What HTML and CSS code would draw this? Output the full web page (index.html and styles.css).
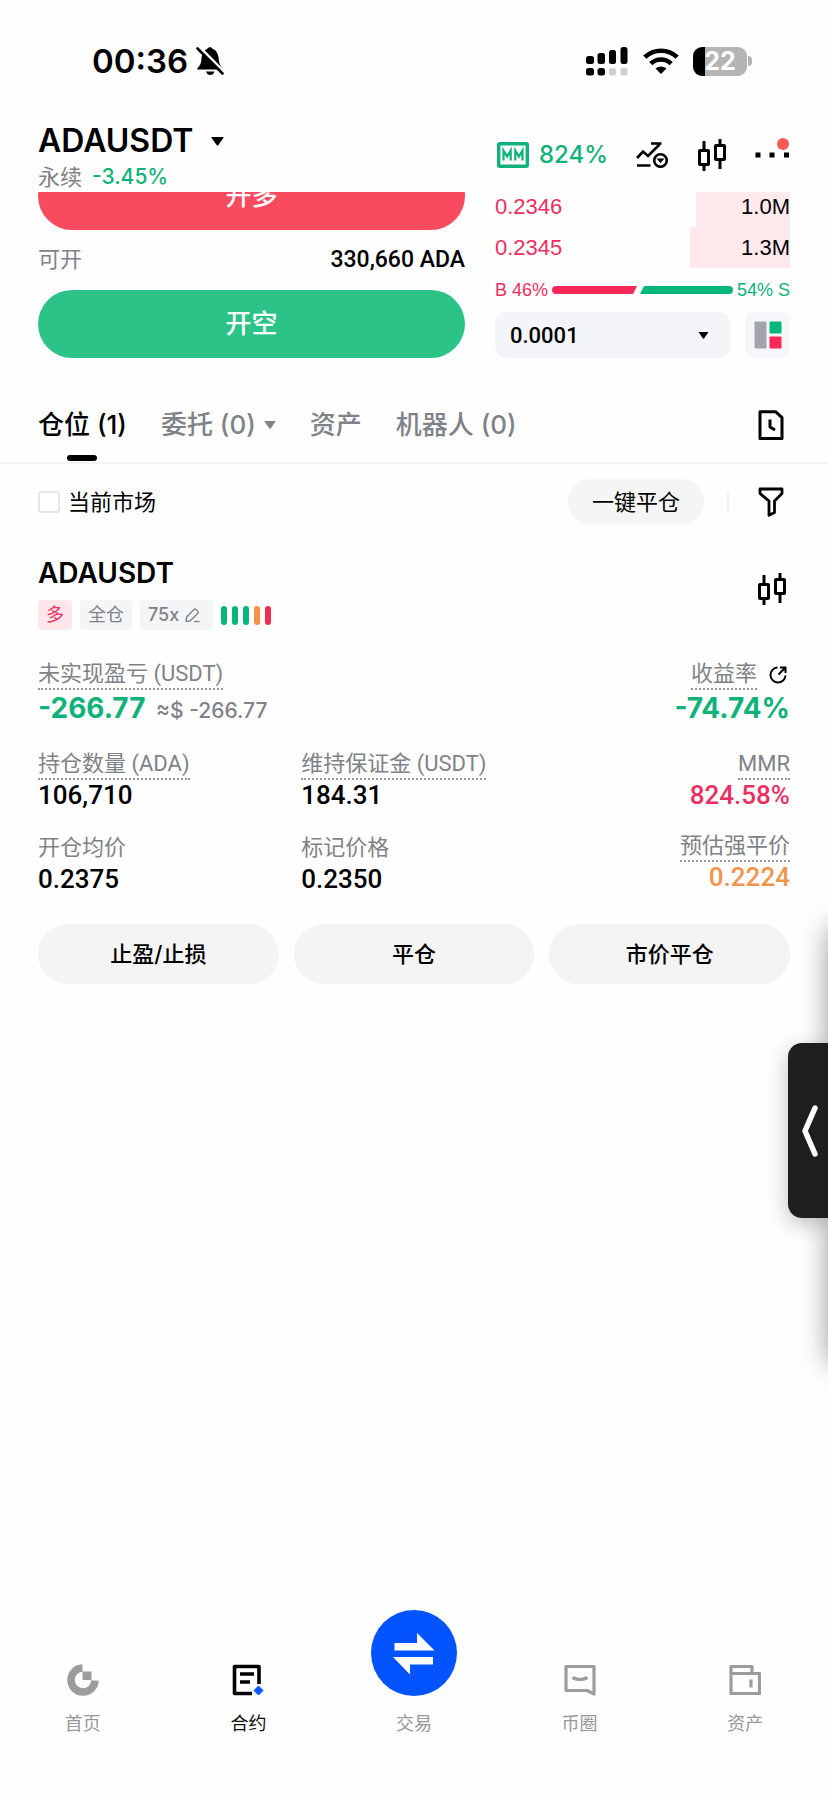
FILE: index.html
```html
<!DOCTYPE html>
<html lang="zh-CN">
<head>
<meta charset="utf-8">
<meta name="viewport" content="width=device-width, initial-scale=1">
<title>ADAUSDT 永续</title>
<link rel="stylesheet" href="styles.css">
</head>
<body>
<svg class="defs" aria-hidden="true">
  <symbol id="candles" viewBox="0 0 30 32">
    <g fill="none" stroke="currentColor" stroke-width="3">
      <rect x="2.5" y="11.5" width="9" height="14" rx="0.5"/>
      <path d="M7 2v9M7 26v6"/>
      <rect x="18.500" y="6.500" width="9" height="14" rx="0.5"/>
      <path d="M23 0v6M23 21v9"/>
    </g>
  </symbol>
  <symbol id="caret" viewBox="0 0 13 9">
    <path d="M0.800 0h11.400q0.800 0 0.300 0.800L7.200 8.300q-0.700 0.800-1.400 0L0.500 0.800Q0 0 0.800 0z" fill="currentColor"/>
  </symbol>
</svg>

<div class="app">
  <div class="status">
    <div class="status-left">
      <time class="clock">00:36</time>
      <svg class="bell" width="28" height="30" viewBox="0 0 28 30" aria-label="静音">
        <path d="M1 23.500c0-1.500 4-4 4.300-9C5.600 8 8 4 11.300 3 12 0.800 16 0.800 16.700 3c3.500 1 5.900 5 6.200 11.500.3 5 4.100 7.500 4.100 9z"/>
        <path d="M10 25.500h8.500q-1 3.500-4.200 3.500T10 25.500z"/>
        <path d="M3 0.500l26 26" stroke="#fff" stroke-width="2.600"/>
        <path d="M1.500 2.500l25 25" stroke="#000" stroke-width="2.600" stroke-linecap="round"/>
      </svg>
    </div>
    <div class="status-right">
      <svg width="43" height="29" viewBox="0 0 43 29" aria-label="信号">
        <rect x="0" y="9" width="8" height="8" rx="2.500"/>
        <rect x="11.500" y="6" width="7.500" height="11" rx="2.500"/>
        <rect x="23" y="3" width="7" height="14" rx="2.500"/>
        <rect x="34.500" y="0" width="7" height="17" rx="2.500"/>
        <rect x="0" y="21" width="8" height="7.500" rx="2.500"/>
        <rect x="11.500" y="21" width="7.500" height="7.500" rx="2.500"/>
        <g fill="#cfcfcf"><rect x="23" y="21" width="7" height="7.500" rx="2.500"/><rect x="34.500" y="21" width="7" height="7.500" rx="2.500"/></g>
      </svg>
      <svg width="36" height="26" viewBox="0 0 36 26" aria-label="无线网络">
        <g fill="none" stroke="#000" stroke-width="4.600">
          <path d="M1.800 9.200a23.500 23.500 0 0 1 32.400 0"/>
          <path d="M7.800 15.600a14.800 14.800 0 0 1 20.400 0"/>
        </g>
        <path d="M12.500 20.500a8.500 8.500 0 0 1 11 0L18 26z"/>
      </svg>
      <div class="battery"><span class="battery-cell">22</span><span class="battery-nub"></span></div>
    </div>
  </div>

  <header class="header">
    <div>
      <button class="pair" type="button"><span>ADAUSDT</span><svg width="13" height="9"><use href="#caret"/></svg></button>
      <p class="pair-sub"><span>永续</span><span class="pct">-3.45%</span></p>
    </div>
    <div class="tools">
      <button class="mm" type="button">
        <svg width="32" height="26" viewBox="0 0 32 26" fill="none" stroke="currentColor" aria-hidden="true">
          <rect x="1.700" y="1.700" width="28.600" height="22.600" rx="1" stroke-width="3.400"/>
          <path d="M6.500 18.500v-10l3.600 6 3.600-6v10M18.300 18.500v-10l3.600 6 3.600-6v10" stroke-width="2.200"/>
        </svg>
        <span>824%</span>
      </button>
      <button class="icon" type="button" aria-label="策略">
        <svg width="33" height="26" viewBox="0 0 33 26" fill="none" stroke="#000" stroke-width="2.600">
          <path d="M1 16l6-6.500 5 4.500L23.500 2.500M15 1.500h10.500M1 23.500h13.500"/>
          <circle cx="24.500" cy="18.500" r="6.300"/>
          <path d="M20.500 16.500h8L24.500 21z" fill="#000" stroke="none"/>
        </svg>
      </button>
      <button class="icon" type="button" aria-label="K线"><svg width="30" height="32"><use href="#candles"/></svg></button>
      <button class="icon more" type="button" aria-label="更多">
        <svg width="35" height="6" viewBox="0 0 35 6"><path d="M0.500 0.500h5v5h-5zM14.500 0.500h5v5h-5zM29 0.500h5v5h-5z"/></svg>
        <span class="dot"></span>
      </button>
    </div>
  </header>

  <main class="main">
    <section class="trade">
      <div class="order">
        <button class="cta long" type="button">开多</button>
        <div class="avail"><span class="label">可开</span><span class="avail-num">330,660 ADA</span></div>
        <button class="cta short" type="button">开空</button>
      </div>
      <div class="book">
        <div class="level first"><span class="ask">0.2346</span><span class="vol" style="width:32%">1.0M</span></div>
        <div class="level"><span class="ask">0.2345</span><span class="vol" style="width:34%">1.3M</span></div>
        <div class="ratio">
          <span class="buy">B 46%</span>
          <span class="ratio-bar"><i class="bar-buy" style="flex-grow:46"></i><i class="bar-sell" style="flex-grow:52"></i></span>
          <span class="sell">54% S</span>
        </div>
        <div class="precision">
          <label class="select"><select aria-label="价格精度"><option>0.0001</option></select><svg width="11" height="7"><use href="#caret"/></svg></label>
          <button class="layout" type="button" aria-label="盘口布局">
            <svg width="28" height="28" viewBox="0 0 28 28"><rect x="0.500" y="0.500" width="12" height="27" rx="1" fill="#a2a4ab"/><rect x="15.500" y="0.500" width="12" height="12" rx="1" fill="#06b77c"/><rect x="15.500" y="15.500" width="12" height="12" rx="1" fill="#fa2856"/></svg>
          </button>
        </div>
      </div>
    </section>

    <nav class="tabs">
      <button class="tab active" type="button">仓位 (1)</button>
      <button class="tab" type="button">委托 (0)<svg width="12" height="8"><use href="#caret"/></svg></button>
      <button class="tab" type="button">资产</button>
      <button class="tab" type="button">机器人 (0)</button>
      <button class="icon history" type="button" aria-label="历史">
        <svg width="26" height="30" viewBox="0 0 26 30" fill="none" stroke="#000" stroke-width="3" stroke-linejoin="round"><path d="M2 1.700h15.500l6.500 6V28.500H2z"/><path d="M12 9.500v7.500l5 3"/></svg>
      </button>
    </nav>

    <div class="filters">
      <label class="check"><input type="checkbox"><span>当前市场</span></label>
      <button class="close-all" type="button">一键平仓</button>
      <span class="sep"></span>
      <button class="icon" type="button" aria-label="筛选">
        <svg width="26" height="30" viewBox="0 0 26 30" fill="none" stroke="#000" stroke-width="2.800" stroke-linejoin="round"><path d="M2 2h22v4.500l-7.500 7.500v11.500l-5.500 2.800V14L2 6.500z"/></svg>
      </button>
    </div>

    <article class="position">
      <div class="pos-head">
        <div>
          <h2 class="pos-name">ADAUSDT</h2>
          <div class="tags">
            <span class="tag side">多</span>
            <span class="tag">全仓</span>
            <button class="tag" type="button">75x<svg width="15" height="15" viewBox="0 0 15 15" fill="none" stroke="currentColor" stroke-width="1.400" stroke-linejoin="round"><path d="M1 13.300l0.500-4L9 1.500q1-0.900 2 0l1.800 1.700q0.900 1 0 2L5 13z"/><path d="M9 13.500h5.500"/></svg></button>
            <span class="risk"><i></i><i></i><i></i><i class="warn"></i><i class="high"></i></span>
          </div>
        </div>
        <button class="icon pos-chart" type="button" aria-label="K线"><svg width="30" height="32"><use href="#candles"/></svg></button>
      </div>

      <div class="pnl">
        <div>
          <p class="label"><span class="hint">未实现盈亏 (USDT)</span></p>
          <p class="big">-266.77 <small>≈$ -266.77</small></p>
        </div>
        <div class="end">
          <p class="label"><span class="hint">收益率</span><svg class="share" width="18" height="18" viewBox="0 0 18 18" fill="none" stroke="#000" stroke-width="2"><path d="M8.500 1.500A7.500 7.500 0 1 0 16.500 9.500"/><path d="M9.500 8.500l6.500-6.500M11 1.500h5.500V7"/></svg></p>
          <p class="big">-74.74%</p>
        </div>
      </div>

      <div class="stats">
        <div><p class="label"><span class="hint">持仓数量 (ADA)</span></p><p class="num">106,710</p></div>
        <div><p class="label"><span class="hint">维持保证金 (USDT)</span></p><p class="num">184.31</p></div>
        <div class="end"><p class="label"><span class="hint">MMR</span></p><p class="num red">824.58%</p></div>
        <div><p class="label">开仓均价</p><p class="num">0.2375</p></div>
        <div><p class="label">标记价格</p><p class="num">0.2350</p></div>
        <div class="end"><p class="label"><span class="hint">预估强平价</span></p><p class="num orange">0.2224</p></div>
      </div>

      <div class="actions">
        <button type="button">止盈/止损</button>
        <button type="button">平仓</button>
        <button type="button">市价平仓</button>
      </div>
    </article>
  </main>

  <nav class="bottom">
    <a class="nav-item" href="#home">
      <svg width="32" height="32" viewBox="0 0 32 32"><path d="M15.500 4A12 12 0 1 0 28 16.500" fill="none" stroke="#9a9c9e" stroke-width="7.500"/><path d="M15.500 7.500h9v8.500h-9z" fill="#9a9c9e"/></svg>
      <span>首页</span>
    </a>
    <a class="nav-item current" href="#futures">
      <svg width="32" height="32" viewBox="0 0 32 32" fill="none" stroke="#000" stroke-width="3.600"><path d="M27 20V2.500H2.500V29.500H20" stroke-linejoin="round"/><path d="M8 10h14M8 18h10"/><path d="M26.500 22l4.500 4.500-4.500 4.500-4.500-4.500z" fill="#0858f5" stroke="#0858f5" stroke-width="1" stroke-linejoin="round"/></svg>
      <span>合约</span>
    </a>
    <a class="nav-item" href="#trade">
      <span class="swap"><svg width="42" height="42" viewBox="0 0 42 42" fill="#fff"><path d="M1.500 11H24V1L41.500 18.500H1.500zM40 32.500H17V42.500L0 25H40z"/></svg></span>
      <span>交易</span>
    </a>
    <a class="nav-item" href="#community">
      <svg width="32" height="32" viewBox="0 0 32 32" fill="none" stroke="#9a9c9e" stroke-width="3.200" stroke-linejoin="round"><path d="M2 2.500h28V30l-7-3.500H2z"/><path d="M8.500 13.500q7.500 4 15 0"/></svg>
      <span>币圈</span>
    </a>
    <a class="nav-item" href="#assets">
      <svg width="32" height="32" viewBox="0 0 32 32" fill="none" stroke="#9a9c9e" stroke-width="3.200" stroke-linejoin="round"><path d="M2 9.500h28.500V29.500H2zM2 9.500V2.500H23V9.500"/><path d="M22 15.500v8"/></svg>
      <span>资产</span>
    </a>
  </nav>

  <div class="drawer"></div>
  <button class="handle" type="button" aria-label="展开侧栏">
    <svg width="16" height="52" viewBox="0 0 16 52" fill="none" stroke="#fff" stroke-width="5.500" stroke-linecap="round" stroke-linejoin="round"><path d="M13 3L3 26l10 23"/></svg>
  </button>
</div>
</body>
</html>
```
FILE: styles.css
```css
* { box-sizing: border-box; }

:root {
  --green: #0fb27a;
  --red: #ea2f62;
  --gray: #7f8287;
  --soft: #f5f5f5;
  --edge: 38px;
  --cjk: "Noto Sans CJK SC", sans-serif;
}

body {
  margin: 0;
  background: #fefefe;
  color: #000;
  font-family: Inter, var(--cjk);
  font-size: 22px;
  line-height: 32px;
}

p, h2 { margin: 0; }
svg { display: block; flex: none; }
.defs { position: absolute; width: 0; height: 0; }

button {
  border: 0;
  padding: 0;
  background: none;
  color: inherit;
  font: inherit;
  cursor: pointer;
}

a { color: inherit; text-decoration: none; }

.app {
  position: relative;
  display: flex;
  flex-direction: column;
  min-height: 100vh;
  overflow: hidden;
}

/* status bar */
.status {
  display: flex;
  justify-content: space-between;
  align-items: center;
  height: 122px;
  padding: 0 76px 0 92px;
}
.status-left { display: flex; align-items: center; gap: 8px; }
.status-right { display: flex; align-items: center; gap: 14px; }
.clock { font-size: 33px; font-weight: 600; }
.battery { display: flex; align-items: center; gap: 1px; }
.battery-cell {
  width: 54px;
  height: 29px;
  border-radius: 9px;
  background: linear-gradient(90deg, #000 12px, #b4b4b4 12px);
  color: #fff;
  font-size: 25px;
  font-weight: 700;
  line-height: 29px;
  text-align: center;
}
.battery-nub { width: 4px; height: 10px; border-radius: 0 5px 5px 0; background: #b4b4b4; }

/* header */
.header {
  display: flex;
  justify-content: space-between;
  align-items: flex-start;
  height: 70px;
  padding: 0 var(--edge);
}
.pair { display: flex; align-items: center; gap: 18px; font-size: 32px; font-weight: 600; line-height: 38px; }
.pair-sub { display: flex; gap: 10px; color: var(--gray); line-height: 34px; }
.pct { color: var(--green); font-size: 21px; font-weight: 500; }
.tools { display: flex; align-items: center; gap: 28px; height: 66px; }
.mm { display: flex; align-items: center; gap: 10px; color: var(--green); font-size: 24px; font-weight: 500; }
.more { position: relative; }
.dot { position: absolute; right: 1px; bottom: 8px; width: 12px; height: 12px; border-radius: 50%; background: #fa5a50; }

/* order form and book */
.trade {
  display: grid;
  grid-template-columns: 427fr 295fr;
  gap: 30px;
  padding: 0 var(--edge);
  overflow: hidden;
}
.order { display: flex; flex-direction: column; }
.cta {
  height: 68px;
  border-radius: 34px;
  color: #fff;
  font-size: 26px;
  font-weight: 500;
}
.long { margin-top: -30px; background: #f94b60; }
.short { background: #2cc388; }
.avail { display: flex; justify-content: space-between; align-items: center; height: 60px; }
.avail-num { font-family: Roboto, var(--cjk); font-size: 23px; font-weight: 500; }

.level, .ratio { font-family: "Liberation Sans", var(--cjk); }
.level { display: flex; justify-content: space-between; line-height: 41px; }
.level.first { margin-top: -6px; }
.ask, .buy { color: var(--red); }
.vol { background: #ffe9ec; text-align: right; }
.ratio { display: flex; align-items: center; gap: 4px; height: 44px; font-size: 18px; }
.ratio-bar { display: flex; flex: 1; height: 8px; }
.ratio-bar i { flex-basis: 0; }
.bar-buy { border-radius: 4px 0 0 4px; background: #fa2856; clip-path: polygon(0 0, 100% 0, calc(100% - 4px) 100%, 0 100%); }
.bar-sell { border-radius: 0 4px 4px 0; background: #06b77c; clip-path: polygon(7px 0, 100% 0, 100% 100%, 3px 100%); }
.sell { color: var(--green); }
.precision { display: flex; gap: 15px; }
.select { position: relative; flex: 1; }
.select select {
  width: 100%;
  height: 46px;
  padding: 0 15px;
  border: 0;
  border-radius: 12px;
  background: #f4f5f8;
  color: #000;
  font: 500 22px Roboto, sans-serif;
  appearance: none;
}
.select svg { position: absolute; right: 21px; top: 20px; pointer-events: none; }
.layout {
  display: grid;
  place-items: center;
  width: 45px;
  height: 46px;
  border-radius: 9px;
  background: #f5f6f9;
}

/* tabs */
.tabs {
  display: flex;
  align-items: stretch;
  gap: 34px;
  height: 72px;
  margin-top: 34px;
  padding: 0 44px 0 var(--edge);
  border-bottom: 2px solid #f3f3f3;
}
.tab { position: relative; display: flex; align-items: center; gap: 8px; padding-bottom: 4px; color: var(--gray); font-size: 26px; font-weight: 500; }
.tab.active { color: #000; }
.tab.active::after {
  content: "";
  position: absolute;
  bottom: 1px;
  left: 50%;
  width: 30px;
  height: 6px;
  margin-left: -15px;
  border-radius: 3px;
  background: #000;
}
.history { margin-left: auto; padding-bottom: 4px; }

/* filters */
.filters { display: flex; align-items: center; height: 76px; padding: 0 44px 0 var(--edge); }
.check { display: flex; align-items: center; gap: 8px; margin-right: auto; }
.check input {
  width: 22px;
  height: 22px;
  margin: 0;
  border: 2px solid #e6e6e6;
  border-radius: 3px;
  background: #fff;
  appearance: none;
}
.close-all { height: 46px; padding: 0 24px; border-radius: 23px; background: var(--soft); }
.sep { width: 2px; height: 22px; margin: 0 29px 0 23px; background: #f1f1f1; }

/* position card */
.position { padding: 13px var(--edge) 0; }
.pos-head { display: flex; justify-content: space-between; align-items: flex-start; }
.pos-chart { margin: 20px 3px 0 0; }
.pos-name { font-size: 28px; font-weight: 600; line-height: 40px; }
.tags { display: flex; align-items: center; gap: 8px; margin-top: 7px; }
.tag {
  display: flex;
  align-items: center;
  gap: 6px;
  height: 30px;
  padding: 0 8px;
  border-radius: 4px;
  background: #f4f5f7;
  color: var(--gray);
  font-size: 18px;
}
.side { background: #ffe6ea; color: var(--red); }
button.tag { padding: 0 13px 0 8px; font-weight: 500; }
.risk { display: flex; gap: 5px; }
.risk i { width: 6px; height: 19px; border-radius: 3px; background: #06b77c; }
.risk .warn { background: #f99148; }
.risk .high { background: #ee2f55; }

.pnl { display: flex; justify-content: space-between; margin-top: 30px; }
.label { display: flex; align-items: center; color: var(--gray); font-family: Roboto, var(--cjk); line-height: 32px; }
.hint { border-bottom: 2px dotted #96999c; line-height: 28px; }
.big { color: var(--green); font-size: 28px; font-weight: 700; line-height: 36px; }
.big small { margin-left: 4px; color: var(--gray); font-size: 21px; font-weight: 500; }
.end { text-align: right; }
.end .label { justify-content: flex-end; }
.share { margin: 0 3px 0 12px; }

.stats { display: grid; grid-template-columns: 35% 35% 30%; row-gap: 22px; margin-top: 21px; }
.num { font-family: Roboto, var(--cjk); font-size: 26px; font-weight: 500; line-height: 30px; }
.num.red { color: var(--red); }
.num.orange { color: #f1944c; }

.actions { display: grid; grid-template-columns: repeat(3, 1fr); gap: 15px; margin-top: 30px; }
.actions button { height: 60px; border-radius: 30px; background: #f4f4f4; font-weight: 500; }

/* bottom navigation */
.bottom { display: grid; grid-template-columns: repeat(5, 1fr); margin-top: auto; height: 160px; border-top: 1px solid #fbfbfb; }
.nav-item {
  display: flex;
  flex-direction: column;
  align-items: center;
  justify-content: flex-end;
  height: 96px;
  gap: 15px;
  color: #96989b;
  font-size: 18px;
  line-height: 26px;
}
.nav-item.current { color: #111; }
.swap { display: grid; place-items: center; flex: none; width: 86px; height: 86px; border-radius: 50%; background: #0354ff; }

/* side drawer */
.drawer {
  position: fixed;
  top: 925px;
  left: 100%;
  width: 60px;
  height: 440px;
  border-radius: 14px;
  box-shadow: 0 0 28px rgba(0, 0, 0, 0.4);
}
.handle {
  position: fixed;
  top: 1043px;
  right: 0;
  display: grid;
  place-items: center end;
  width: 40px;
  height: 175px;
  padding-right: 10px;
  border-radius: 14px 0 0 14px;
  background: #1e1e1e;
  box-shadow: 0 6px 22px rgba(0, 0, 0, 0.25);
}
```
